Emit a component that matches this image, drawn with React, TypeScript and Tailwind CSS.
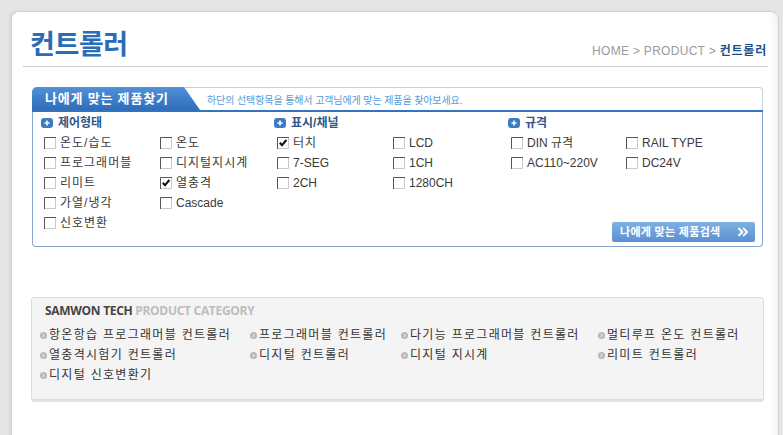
import { ChevronsRight } from 'lucide-react';

const KR = 'font-["Liberation_Sans","Noto_Sans_CJK_KR",sans-serif]';

type Cell = { label: string; checked?: boolean } | null;

// six columns, five rows of options under the three group headings
const columns: Cell[][] = [
  [{ label: '온도/습도' }, { label: '프로그래머블' }, { label: '리미트' }, { label: '가열/냉각' }, { label: '신호변환' }],
  [{ label: '온도' }, { label: '디지털지시계' }, { label: '열충격', checked: true }, { label: 'Cascade' }, null],
  [{ label: '터치', checked: true }, { label: '7-SEG' }, { label: '2CH' }, null, null],
  [{ label: 'LCD' }, { label: '1CH' }, { label: '1280CH' }, null, null],
  [{ label: 'DIN 규격' }, { label: 'AC110~220V' }, null, null, null],
  [{ label: 'RAIL TYPE' }, { label: 'DC24V' }, null, null, null],
];

const groups = ['제어형태', '표시/채널', '규격'];

const categories: string[][] = [
  ['항온항습 프로그래머블 컨트롤러', '열충격시험기 컨트롤러', '디지털 신호변환기'],
  ['프로그래머블 컨트롤러', '디지털 컨트롤러'],
  ['다기능 프로그래머블 컨트롤러', '디지털 지시계'],
  ['멀티루프 온도 컨트롤러', '리미트 컨트롤러'],
];

const hasHangul = (s: string) => /[가-힣]/.test(s) && !/[A-Z]/.test(s);

function PlusIcon() {
  return (
    <svg width="12" height="10" viewBox="0 0 12 10" className="shrink-0">
      <rect x="0" y="0" width="12" height="10" rx="3" fill="#3b7cc4" />
      <path d="M6 2.5v5M3.5 5h5" stroke="#fff" strokeWidth="1.6" />
    </svg>
  );
}

function CheckBox({ checked }: { checked?: boolean }) {
  return (
    <svg width="12" height="12" viewBox="0 0 12 12" className="shrink-0">
      <rect x="0" y="0" width="12" height="12" fill="#fff" />
      <path d="M0.5 12V0.5H12" fill="none" stroke="#555" strokeWidth="1" />
      <path d="M1 11.5H11.5V1" fill="none" stroke="#c9c9c9" strokeWidth="1" />
      {checked && <path d="M2.8 5.8L5 8.2L9.4 3" fill="none" stroke="#111" strokeWidth="2" />}
    </svg>
  );
}

function Bullet() {
  return (
    <svg width="7" height="7" viewBox="0 0 7 7" className="shrink-0">
      <circle cx="3.5" cy="3.5" r="3.5" fill="#b7b7b7" />
      <path d="M2.6 2L4.3 3.5L2.6 5" fill="none" stroke="#fff" strokeWidth="1" />
    </svg>
  );
}

export default function App() {
  return (
    <main className={`min-h-screen bg-[#e5e5e5] pt-[11px] pl-[11px] ${KR}`}>
      <div className="w-[768px] min-h-[440px] bg-white border border-[#d2d2d2] rounded-t-[8px] shadow-[inset_-10px_0_10px_-8px_rgba(0,0,0,0.08),-2px_0_3px_rgba(0,0,0,0.06)]">

        {/* Page title + breadcrumb */}
        <div className="ml-[11px] mr-[10px] pt-[17px] pb-[5px] flex items-end justify-between border-b border-[#cccccc]">
          <h1 className="pl-[7px] text-[27px] leading-[32px] font-bold tracking-[-0.4px] text-[#2a6cb8]">컨트롤러</h1>
          <p className="mb-[2px] pr-[1px] text-[12px] leading-[16px] text-[#9a9a9a] tracking-[0.3px]">
            HOME &gt; PRODUCT &gt; <span className="font-bold text-[#1d4f8e] tracking-[0.8px]">컨트롤러</span>
          </p>
        </div>

        {/* Product finder */}
        <section className="ml-[20px] mt-[20px] w-[731px]">
          <div className="flex h-[23px]">
            <div className="relative z-10 w-[168px] h-full pl-[13px] flex items-center rounded-tl-[5px] bg-gradient-to-b from-[#4f91d8] to-[#2f6db8] [clip-path:polygon(0_0,152px_0,168px_100%,0_100%)] text-white font-bold text-[13px] tracking-[0.8px]">
              나에게 맞는 제품찾기
            </div>
            <div className="flex-1 -ml-[16px] pl-[23px] pt-[6px] border-t border-r border-[#c6d2e0] rounded-tr-[4px] text-[10px] leading-[14px] text-[#5a9ad8] tracking-[-0.1px]">
              하단의 선택항목을 통해서 고객님에게 맞는 제품을 찾아보세요.
            </div>
          </div>
          <div className="h-[2px] bg-[#3474bf]" />
          <div className="border-l border-r border-b border-[#86a6cd] rounded-b-[4px] pb-[4px]">
            <div className="pl-[11px] pt-[1px] grid grid-cols-[116px_117px_116px_118px_115px_1fr] auto-rows-[20px]">
              {groups.map((g) => (
                <div key={g} className="col-span-2 flex items-center gap-[5px] -ml-[3px]">
                  <PlusIcon />
                  <span className="text-[12px] font-bold text-[#2f5687]">{g}</span>
                </div>
              ))}
              {[0, 1, 2, 3, 4].map((row) =>
                columns.map((col, ci) => {
                  const cell = col[row];
                  return (
                    <div key={`${row}-${ci}`} className="flex items-center gap-[4px]">
                      {cell && (
                        <>
                          <CheckBox checked={cell.checked} />
                          <span className={hasHangul(cell.label) ? 'text-[12px] text-[#3a3a3a] whitespace-nowrap tracking-[1px]' : 'text-[12px] text-[#3a3a3a] whitespace-nowrap tracking-[0px]'}>
                            {cell.label}
                          </span>
                        </>
                      )}
                    </div>
                  );
                })
              )}
            </div>
            <div className="flex justify-end pr-[7px] -mt-[11px]">
              <button className="w-[143px] h-[20px] pl-[8px] pr-[4px] flex items-center justify-between rounded-[2px] bg-gradient-to-b from-[#80b0e2] to-[#5b91cf] text-white font-bold text-[11px] tracking-[0.3px]">
                나에게 맞는 제품검색
                <ChevronsRight size={16} strokeWidth={3} />
              </button>
            </div>
          </div>
        </section>

        {/* Product category */}
        <section className="ml-[19px] mt-[50px] w-[733px] bg-[#f4f4f4] border border-[#dcdcdc] rounded-[3px] shadow-[0_2px_0_#e2e2e2] pt-[6px] pb-[14px]">
          <p className='pl-[13px] text-[12px] leading-[14px] font-bold tracking-[-0.3px] font-["Open_Sans",sans-serif]'>
            <span className="text-[#444]">SAMWON TECH</span>{' '}
            <span className="text-[#bdbdbd]">PRODUCT CATEGORY</span>
          </p>
          <div className="mt-[7px] pl-[8px] grid grid-cols-[210px_151px_197px_1fr]">
            {categories.map((col, i) => (
              <ul key={i}>
                {col.map((c) => (
                  <li key={c} className="h-[20px] flex items-center gap-[2px] text-[12px] text-[#333] whitespace-nowrap tracking-[1.3px]">
                    <Bullet />
                    {c}
                  </li>
                ))}
              </ul>
            ))}
          </div>
        </section>
      </div>
    </main>
  );
}
